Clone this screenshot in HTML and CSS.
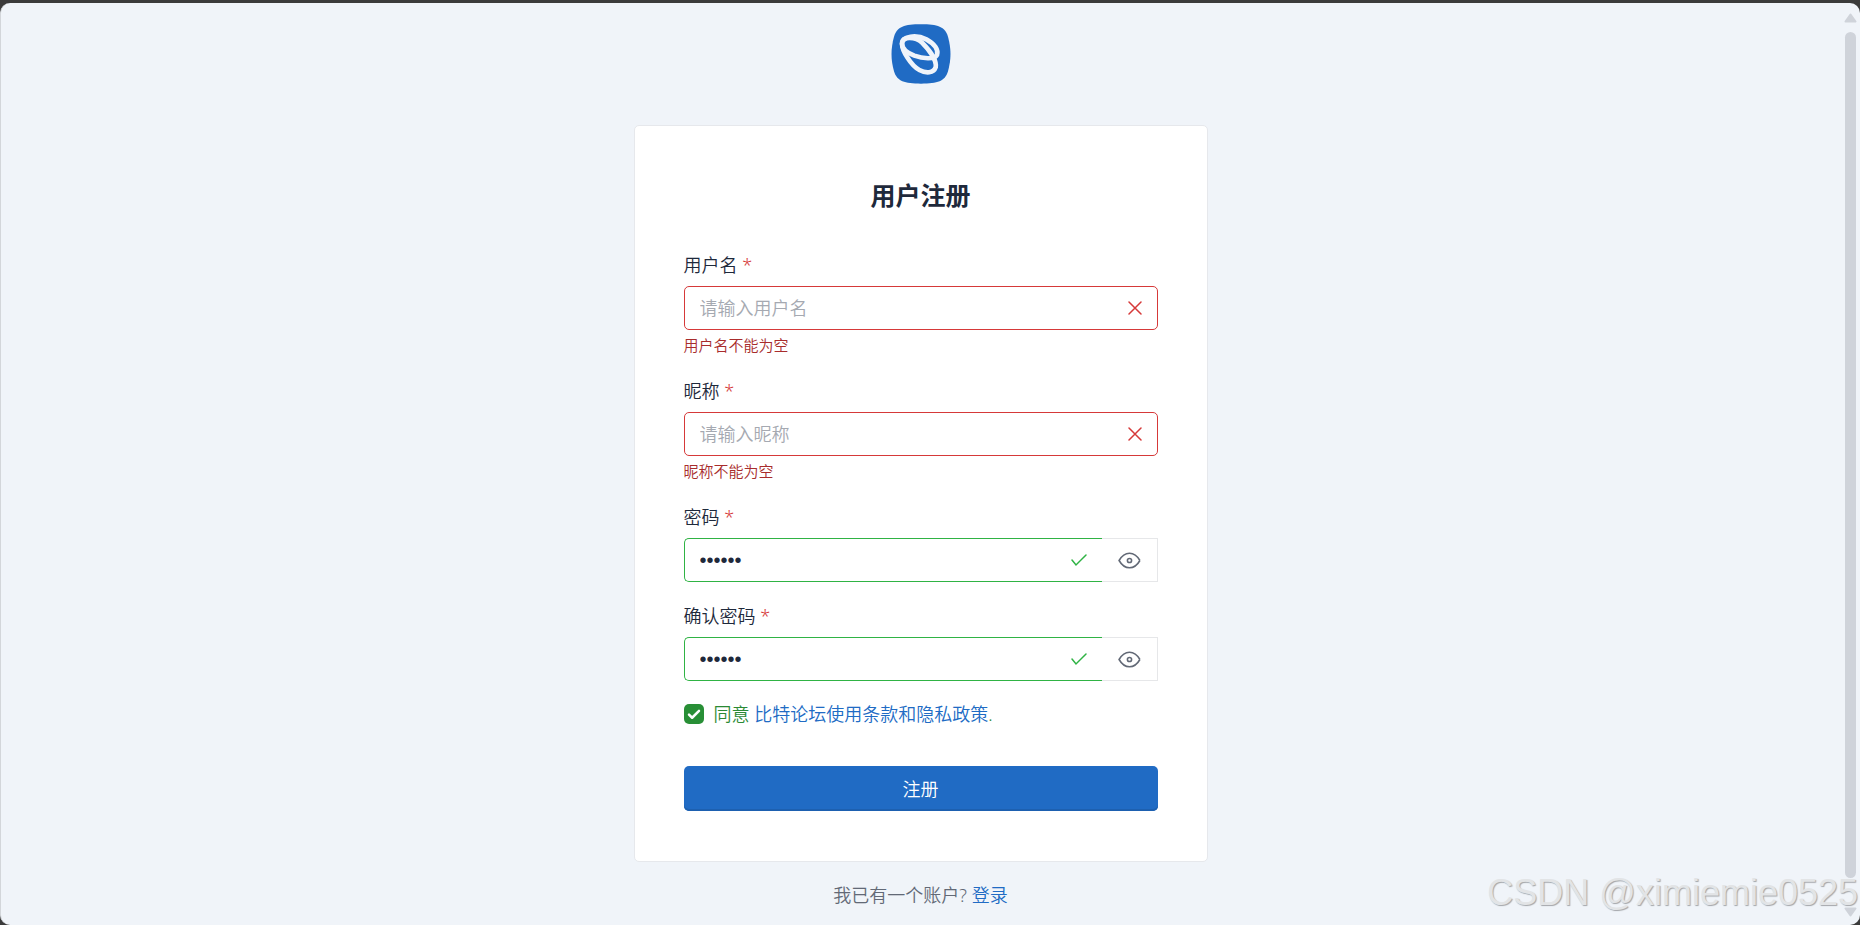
FILE: index.html
```html
<!DOCTYPE html>
<html lang="zh-CN">

<head>
    <meta charset="UTF-8">
    <meta name="viewport" content="width=device-width, initial-scale=1">
    <title>用户注册</title>
    <link rel="stylesheet" href="styles.css">
</head>

<body>
    <div class="window">
        <main class="page">
            <a href="#" class="logo" aria-label="比特论坛">
                <svg width="60" height="60" viewBox="0 0 180 180">
                    <path fill="#206bc4" d="M90 1C140 1 162 8 171 38C181 75 181 105 171 142C162 172 140 179 90 179C40 179 18 172 9 142C-1 105 -1 75 9 38C18 8 40 1 90 1Z" />
                    <g fill="none" stroke="#f0f4fa" stroke-width="14">
                        <path d="M33 59C33 36 76 31 106 46C132 60 143 78 138 93C131 107 95 104 70 95C45 85 33 75 33 59Z" />
                        <path d="M33 59C33 80 60 125 85 138C105 149 128 148 134 130C138 108 112 75 93 56C75 39 33 34 33 59Z" />
                    </g>
                </svg>
            </a>

            <form class="card">
                <h2>用户注册</h2>

                <div class="group">
                    <label class="required" for="username">用户名</label>
                    <div class="field invalid">
                        <input type="text" id="username" placeholder="请输入用户名">
                        <svg class="mark" viewBox="0 0 14 14"><path d="M1 1L13 13M13 1L1 13" /></svg>
                    </div>
                    <div class="feedback">用户名不能为空</div>
                </div>

                <div class="group">
                    <label class="required" for="nickname">昵称</label>
                    <div class="field invalid">
                        <input type="text" id="nickname" placeholder="请输入昵称">
                        <svg class="mark" viewBox="0 0 14 14"><path d="M1 1L13 13M13 1L1 13" /></svg>
                    </div>
                    <div class="feedback">昵称不能为空</div>
                </div>

                <div class="group">
                    <label class="required" for="password">密码</label>
                    <div class="input-group">
                        <div class="field valid">
                            <input type="password" id="password" value="123456">
                            <svg class="mark wide" viewBox="0 0 16 14"><path d="M1 7L5 12L15 2" /></svg>
                        </div>
                        <button type="button" class="eye" aria-label="显示密码">
                            <svg width="25" height="25" viewBox="0 0 24 24">
                                <circle cx="12" cy="12" r="2" />
                                <path d="M22 12c-2.667 4.667 -6 7 -10 7s-7.333 -2.333 -10 -7c2.667 -4.667 6 -7 10 -7s7.333 2.333 10 7" />
                            </svg>
                        </button>
                    </div>
                </div>

                <div class="group">
                    <label class="required" for="passwordRepeat">确认密码</label>
                    <div class="input-group">
                        <div class="field valid">
                            <input type="password" id="passwordRepeat" value="123456">
                            <svg class="mark wide" viewBox="0 0 16 14"><path d="M1 7L5 12L15 2" /></svg>
                        </div>
                        <button type="button" class="eye" aria-label="显示密码">
                            <svg width="25" height="25" viewBox="0 0 24 24">
                                <circle cx="12" cy="12" r="2" />
                                <path d="M22 12c-2.667 4.667 -6 7 -10 7s-7.333 -2.333 -10 -7c2.667 -4.667 6 -7 10 -7s7.333 2.333 10 7" />
                            </svg>
                        </button>
                    </div>
                </div>

                <div class="agree">
                    <input type="checkbox" id="policy" checked>
                    <label for="policy">同意 <a href="#">比特论坛使用条款和隐私政策</a>.</label>
                </div>

                <button type="submit" class="submit">注册</button>
            </form>

            <p class="login">我已有一个账户? <a href="#">登录</a></p>
        </main>

        <div class="scrollbar">
            <svg width="13" height="10" viewBox="0 0 13 10"><path d="M6.500 1.500L11.500 8.500H1.500Z" /></svg>
            <div class="thumb"></div>
            <svg width="13" height="10" viewBox="0 0 13 10"><path d="M6.500 8.500L11.500 1.500H1.500Z" /></svg>
        </div>
    </div>

    <div class="watermark">CSDN @ximiemie0525</div>
</body>

</html>
```

FILE: styles.css
```css
* {
    box-sizing: border-box;
}

body {
    margin: 0;
    padding-top: 3px;
    background-color: #3b3b3b;
    color: #1e293b;
    font-family: "Noto Sans", "Noto Sans CJK SC", sans-serif;
    font-size: 18px;
    font-weight: 350;
    line-height: 26px;
}

a {
    color: #206bc4;
    text-decoration: none;
}

input,
button {
    font: inherit;
    color: inherit;
}

/* Browser window */
.window {
    display: flex;
    min-height: calc(100vh - 3px);
    border-left: 1px solid #d3d6da;
    border-radius: 10px;
    background-color: #f0f4f9;
}

.page {
    flex: 1;
    display: flex;
    flex-direction: column;
    align-items: center;
    padding: 21px 16px 0;
}

.logo {
    height: 60px;
    margin-bottom: 41px;
}

.logo svg {
    display: block;
}

/* Register card */
.card {
    width: 100%;
    max-width: 574px;
    padding: 49px 49px 50px;
    border: 1px solid #e6e8ec;
    border-radius: 5px;
    background-color: #ffffff;
}

h2 {
    margin: 0 0 37px;
    font-size: 25px;
    font-weight: 700;
    line-height: 40px;
    text-align: center;
}

.group {
    margin-bottom: 21px;
}

.group label {
    display: block;
    margin-bottom: 8px;
}

.required::after {
    content: " *";
    color: #d63939;
}

.input-group {
    display: flex;
}

.field {
    flex: 1;
    display: flex;
    align-items: center;
    height: 44px;
    padding: 0 15px;
    border: 1px solid;
    border-radius: 5px;
}

.field input {
    flex: 1;
    min-width: 0;
    padding: 0;
    border: 0;
    outline: 0;
    background: none;
    color: #1e293b;
}

.field input[type="password"] {
    font-family: "Liberation Sans", sans-serif;
    font-size: 20px;
}

.field input::placeholder {
    color: #a5a9b1;
}

.invalid {
    border-color: #d63939;
}

.valid {
    border-color: #2fb344;
    border-right: 0;
    border-radius: 5px 0 0 5px;
}

.mark {
    width: 14px;
    height: 14px;
    fill: none;
    stroke-width: 1.5;
    stroke-linecap: round;
}

.mark.wide {
    width: 16px;
}

.invalid .mark {
    stroke: #d63939;
}

.valid .mark {
    stroke: #2fb344;
}

.feedback {
    margin-top: 4px;
    color: #a82c2c;
    font-size: 15px;
    line-height: 23px;
}

.eye {
    display: flex;
    align-items: center;
    justify-content: center;
    width: 56px;
    padding: 0;
    border: 1px solid #e6e7e9;
    border-left: 0;
    background-color: #ffffff;
}

.eye svg {
    fill: none;
    stroke: #626976;
    stroke-width: 1.5;
}

.agree {
    display: flex;
    align-items: center;
    gap: 10px;
    margin-bottom: 40px;
    color: #2b8a34;
    line-height: 24px;
}

.agree input {
    appearance: none;
    width: 20px;
    height: 20px;
    margin: 0;
    border-radius: 5px;
    background: #288f36 url("data:image/svg+xml,%3Csvg xmlns='http://www.w3.org/2000/svg' viewBox='0 0 16 16'%3E%3Cpath fill='none' stroke='%23fff' stroke-width='2' stroke-linecap='round' stroke-linejoin='round' d='M4 8.500l2.500 2.500l5.500-5.500'/%3E%3C/svg%3E");
}

.submit {
    display: block;
    width: 100%;
    height: 45px;
    border: 0;
    border-radius: 5px;
    background-color: #206bc4;
    box-shadow: inset 0 -2px 0 #1d60b0;
    color: #ffffff;
}

.login {
    margin: 20px 0 0;
    color: #626976;
}

/* Scrollbar */
.scrollbar {
    display: flex;
    flex-direction: column;
    align-items: center;
    gap: 9px;
    width: 20px;
    padding: 10px 0 8px;
}

.scrollbar svg {
    fill: #cfd3da;
    stroke: #cfd3da;
    stroke-width: 2;
    stroke-linejoin: round;
}

.thumb {
    flex: 1;
    width: 11px;
    margin-bottom: 20px;
    border-radius: 6px;
    background-color: #cfd3da;
}

.watermark {
    position: absolute;
    right: 2px;
    bottom: 12px;
    color: #e2e4e6;
    font-family: "Liberation Sans", sans-serif;
    font-size: 36px;
    line-height: 40px;
    text-shadow: 1px 1px 1px #a3a6aa;
}
```
